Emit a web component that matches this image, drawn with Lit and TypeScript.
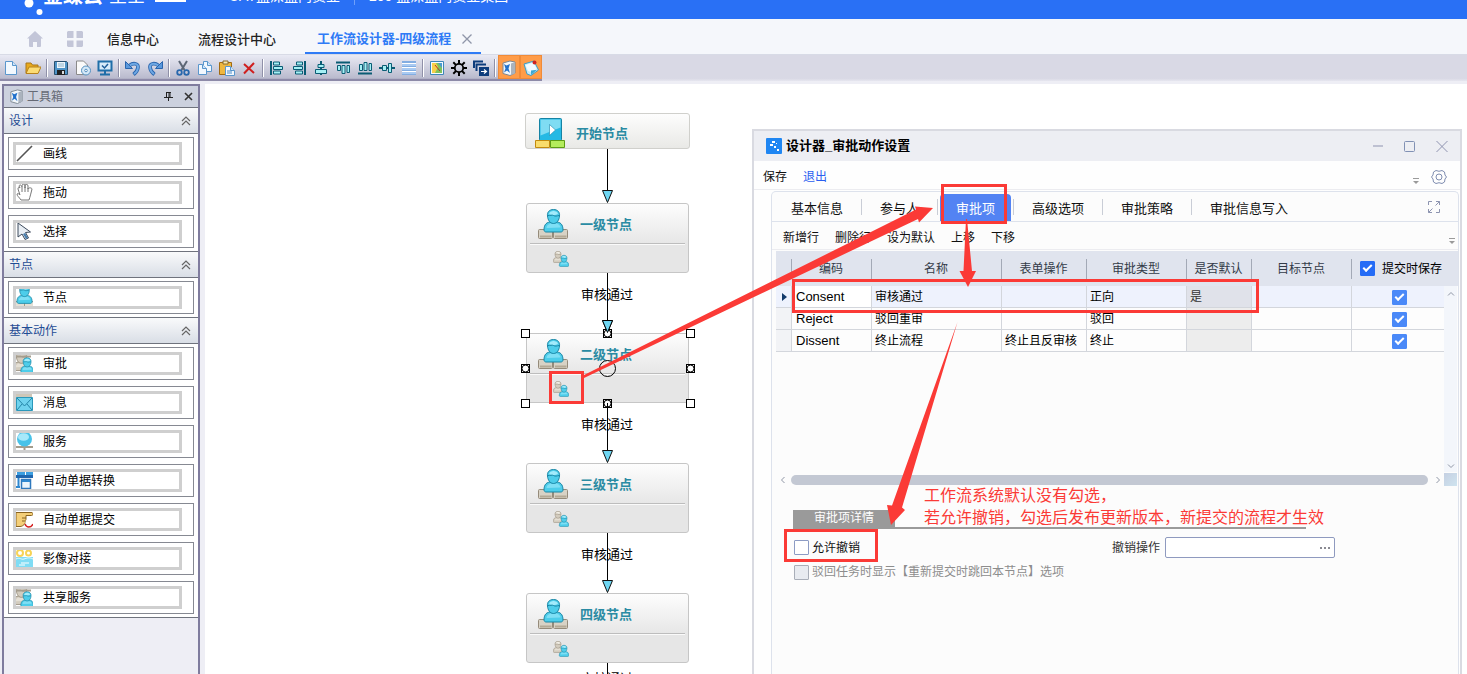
import { LitElement, html, svg, css, nothing } from "lit";
import { customElement, state } from "lit/decorators.js";
import { classMap } from "lit/directives/class-map.js";
import { styleMap } from "lit/directives/style-map.js";

const icon = (size: number, body: unknown, box = size) =>
  html`<svg class="ico" width=${size} height=${size} viewBox="0 0 ${box} ${box}" aria-hidden="true">${body}</svg>`;

/* ---------- 16px toolbar glyphs ---------- */
const page = (x = 2, y = 1, w = 12, h = 14) =>
  svg`<path d="M${x + 0.5} ${y + 0.5}h${w - 5}l4 4v${h - 5}h-${w - 1}z" fill="#f2f8fe" stroke="#5a96cc"/><path d="M${x + w - 4.5} ${y + 0.5}v4h4" fill="#cfe4f8" stroke="#5a96cc"/>`;
const bars = "#a5f0f5";
const glyphs: Record<string, unknown> = {
  new: page(),
  open: svg`<path d="M1 13V3h5l1.500 2H13v3" fill="#e8a91c" stroke="#a8761a"/><path d="M1 13.500L4 7h12l-3 6.500z" fill="#fcdc74" stroke="#b8821c"/>`,
  save: svg`<path d="M1.500 1.500h12l1 1v12h-13z" fill="#4f94c8" stroke="#29506f"/><path d="M4 2h8v6H4z" fill="#eef6fb"/><path d="M5 4h6M5 6h6" stroke="#8db4cc"/><path d="M4 10h8v5H4z" fill="#222"/><path d="M9 11h2v3H9z" fill="#ddd"/>`,
  disc: svg`<path d="M1.500 1V14.500h11V5L8.500 1z" fill="#fafafa" stroke="#8a8a8a"/><circle cx="11" cy="10.500" r="4.500" fill="#d5e9f8" stroke="#5590c0"/><circle cx="11" cy="10.500" r="1.300" fill="#fff" stroke="#5590c0"/>`,
  monitor: svg`<path d="M1.500 1.500h13v9h-13z" fill="#d7ecfa" stroke="#1f6ea8" stroke-width="2"/><path d="M5 5.500l2.500 2.500L11 4" fill="none" stroke="#1f5f9a" stroke-width="1.500"/><path d="M8 11v3M3 14.500h10" stroke="#1f6ea8" stroke-width="2"/>`,
  undo: svg`<path d="M4.500 5.500C9 2 13.500 4 13 7.500c-.300 3-2 5-4.500 7" fill="none" stroke="#2a65ad" stroke-width="3.600"/><path d="M4.500 5.500C9 2 13.500 4 13 7.500c-.300 3-2 5-4 6.500" fill="none" stroke="#6fa8e4" stroke-width="2"/><path d="M.500 1.500v7h7z" fill="#5a98dc" stroke="#2a65ad"/>`,
  redo: svg`<path d="M11.500 5.500C7 2 2.500 4 3 7.500c.300 3 2 5 4.500 7" fill="none" stroke="#2a65ad" stroke-width="3.600"/><path d="M11.500 5.500C7 2 2.500 4 3 7.500c.300 3 2 5 4 6.500" fill="none" stroke="#6fa8e4" stroke-width="2"/><path d="M15.500 1.500v7h-7z" fill="#5a98dc" stroke="#2a65ad"/>`,
  cut: svg`<path d="M4 1l5.500 9M12 1L6.500 10" stroke="#5c6675" stroke-width="2"/><circle cx="4.500" cy="12.500" r="2.300" fill="none" stroke="#2867ac" stroke-width="1.800"/><circle cx="11.500" cy="12.500" r="2.300" fill="none" stroke="#2867ac" stroke-width="1.800"/>`,
  copy: svg`${page(6, 1, 9, 11)}${page(1, 4, 9, 11)}`,
  paste: svg`<path d="M.500 2.500h12v12H.500z" fill="#efb73e" stroke="#a06a12"/><path d="M4 1h5v3H4z" fill="#f8e9b0" stroke="#8a6a2a"/>${page(6, 6, 10, 10)}<path d="M8 11h5M8 13h5" stroke="#4c8cc8"/>`,
  del: svg`<path d="M3 4l10 9M13 3L3 13.500" stroke="#cf1f1f" stroke-width="2"/>`,
  alignL: svg`<path d="M2 1v14" stroke="#0a5c74" stroke-width="2"/><path d="M4.500 2h6v3h-6zM4.500 6.500h9v3h-9zM4.500 11h7v3h-7z" fill=${bars} stroke="#0a5c74"/>`,
  alignR: svg`<path d="M14 1v14" stroke="#0a5c74" stroke-width="2"/><path d="M5.500 2h6v3h-6zM2.500 6.500h9v3h-9zM4.500 11h7v3h-7z" fill=${bars} stroke="#0a5c74"/>`,
  alignC: svg`<path d="M8 1v14" stroke="#0a5c74" stroke-width="2"/><path d="M5 4.500h6v3H5zM2.500 9.500h11v4h-11z" fill=${bars} stroke="#0a5c74"/>`,
  alignT: svg`<path d="M1 2.500h14" stroke="#0a5c74" stroke-width="2"/><path d="M2.500 5.500h3v5h-3zM7 5.500h3v8H7zM12 5.500h2.500v7H12z" fill=${bars} stroke="#0a5c74"/>`,
  alignB: svg`<path d="M1 13.500h14" stroke="#0a5c74" stroke-width="2"/><path d="M2.500 4.500h3v6h-3zM7 2.500h3v8H7zM12 3.500h2.500v7H12z" fill=${bars} stroke="#0a5c74"/>`,
  alignM: svg`<path d="M0 8h16" stroke="#0a5c74" stroke-width="2"/><path d="M3.500 5.500h4v5h-4zM9.500 3.500h3v9h-3z" fill=${bars} stroke="#0a5c74"/>`,
  rows: svg`<path d="M1 1h14v14H1z" fill="#fff"/><path d="M1 2h14M1 6h14M1 10h14M1 14h14" stroke="#5b93d8" stroke-width="1.500"/><path d="M1 4h14v2H1zM1 8h14v2H1zM1 12h14v2H1z" fill="#a9caf2"/>`,
  map: svg`<path d="M1.500 1.500h13v13h-13z" fill="#f4fbff" stroke="#3d87b8"/><path d="M3 3h10v10H3z" fill="#7fc25c"/><path d="M3 3h4l2 4-3 6H3z" fill="#f6cf4a"/><path d="M9 3h4v5z" fill="#4a9ad0"/><path d="M6 5l5 6" stroke="#b43a28"/>`,
  gear: svg`<circle cx="8" cy="8" r="4.200" fill="none" stroke="#000" stroke-width="1.800"/><path d="M8 0v4M8 12v4M0 8h4M12 8h4M2.300 2.300l2.800 2.800M10.900 10.900l2.800 2.800M2.300 13.700l2.800-2.800M10.900 5.100l2.800-2.800" stroke="#000" stroke-width="2"/>`,
  layers: svg`<path d="M1 8V1.500h9M3.500 11V4.500H13" fill="none" stroke="#0d3c7c" stroke-width="2"/><path d="M6 7h10v9H6z" fill="#0d3c7c"/><path d="M8 11.500h5M11 9.500l2.500 2-2.500 2" fill="none" stroke="#fff" stroke-width="1.200"/>`,
  cube: svg`<path d="M2 3l7-2 5 1v11l-5 2.500-7-2z" fill="#f3f7fa" stroke="#7d8792"/><path d="M10 3.500l4-1.500v11.500L10 15z" fill="#aab3be"/><path d="M3 4l2.500 1.500L9 4 7.500 8.500 9 13l-3-2.500-3 2 1.500-4z" fill="#2272cc"/>`,
  note: svg`<path d="M1 4l10-3 4.500 9L8 15.500l-4-1.500z" fill="#c4eaf8" stroke="#3e9cc4"/><path d="M2.500 5l8-2.500L14 9.500 8 12l-3-1z" fill="#f3fbff"/><path d="M8 15l0-4.500 6-.800z" fill="#3aa7d4"/><circle cx="11.500" cy="2.500" r="2" fill="#cc2222"/>`,
};
const TOOLBAR = [
  ["new:新建", "open:打开"],
  ["save:保存", "disc:另存", "monitor:检查"],
  ["undo:撤消", "redo:重做"],
  ["cut:剪切", "copy:复制", "paste:粘贴", "del:删除"],
  ["alignL:左对齐", "alignR:右对齐", "alignC:居中", "alignT:顶对齐", "alignB:底对齐", "alignM:中线", "rows:等高"],
  ["map:缩略图", "gear:设置", "layers:图层"],
  ["cube:工具箱", "note:便签"],
];

/* ---------- people and toolbox pictures ---------- */
const bust = (tone: "blue" | "grey") => {
  const [a, b, c] = tone === "blue" ? ["#a2ebfb", "#4dcdea", "#1b86a5"] : ["#f1ede4", "#d3ccbe", "#958b7a"];
  return svg`<path d="M.500 21c0-6 3-8 7-8h5c4 0 7 2 7 8 0 1-1 2-2 2h-15c-1 0-2-1-2-2z" fill=${b} stroke=${c}/>
    <path d="M3 19c0-3 3-4.500 5-4.500h4c2 0 5 1.500 5 4z" fill=${a} opacity=".6"/>
    <path d="M10 .500c4 0 6.500 2.500 6 6.500-.300 4-2.500 7.500-6 7.500S4.300 11 4 7C3.500 3 6 .500 10 .500z" fill=${b} stroke=${c}/>
    <path d="M5.500 4.500c1-3.500 8-3.500 9 0-2 2-7 2-9 0z" fill=${a}/><path d="M4.500 6.500c2 .500 4-1 5.500 0s3.500.500 5.500 0" fill="none" stroke=${c}/>`;
};
const nodePerson = html`<svg class="ico" width="30" height="30" viewBox="0 0 30 30" aria-hidden="true">
  <rect x=".500" y="20.500" width="14" height="9" rx="1" fill="#d8d2c5" stroke="#958b7a"/><rect x="15.500" y="20.500" width="14" height="9" rx="1" fill="#d8d2c5" stroke="#958b7a"/>
  <path d="M2 27.500h11.500M17 27.500h11.500" stroke="#b3a996" stroke-width="2"/>
  <g transform="translate(5.500 0)">${bust("blue")}</g></svg>`;
const startIcon = html`<svg class="ico" width="30" height="30" viewBox="0 0 30 30" aria-hidden="true">
  <rect x="4.500" y=".500" width="22" height="22" rx="1" fill="#25b9e4" stroke="#1583a4"/><path d="M5.500 1.500h20v8l-20 8z" fill="#7fdcf3"/>
  <path d="M14.500 6.500l6 5.500-6 5.500z" fill="#fff" stroke="#1787ab" stroke-width=".600"/>
  <path d="M.500 22.500h14v7h-14z" fill="#f9dc6c" stroke="#c28a0e"/><path d="M15.500 22.500h14v7h-14z" fill="#b4ec5c" stroke="#5d9c14"/></svg>`;
const pair = (size: number) => html`<svg class="ico" width=${size} height=${size} viewBox="0 0 16 16" aria-hidden="true">
  <g transform="translate(0 0) scale(.5 .5)">${bust("grey")}</g><g transform="translate(6 4) scale(.5 .5)">${bust("blue")}</g></svg>`;
const twoHeads = svg`<g transform="translate(-3 -4) scale(.85)">${bust("grey")}</g><path d="M1 1.500h14" stroke="#a59d8e" stroke-width="2"/><g transform="translate(4.500 2.500) scale(.66)">${bust("blue")}</g>`;

const toolIcons: Record<string, unknown> = {
  line: svg`<path d="M1 16L16 1" stroke="#555" stroke-width="1.600"/>`,
  hand: svg`<path d="M5 16c-2-3-4-4-4-6 1-1 2 0 3 1L2 5c0-2 1-2 2-1L3 2c1-2 2-1 3 1V1c1-1 2-1 3 0v3-3c1-1 3-1 3 1v3c1-2 4-1 4 0-1 4-2 8-3 11z" fill="#fff" stroke="#777"/><path d="M6 3v5M9 3v5M12 4v4" stroke="#777"/>`,
  pick: svg`<path d="M2 0v14l4-3 3 5.500 3.500-1.500-3-5.500 5-.500z" fill="#e8eef4" stroke="#3c4a5c"/><path d="M9 10l3 5-2 1-3-5z" fill="#4a7fae"/>`,
  node: svg`<path d="M0 12h17v5H0z" fill="#e4dfd4"/><path d="M0 12.500h17M8.500 12v5" stroke="#a49a88"/><g transform="translate(.500 -4) scale(.8)">${bust("blue")}</g>`,
  approve: twoHeads,
  mail: svg`<path d="M0 0h16v5H0z" fill="#cec7b8"/><path d="M.500 3.500h16v13H.500z" fill="#6fd3ee" stroke="#2a98bb"/><path d="M1 4l7.500 8L16 4M1 16l5-6M16 16l-5-6" fill="none" stroke="#2386a8"/>`,
  globe: svg`<path d="M0 14h17" stroke="#a49c8c" stroke-width="2"/><path d="M8.500 12v5" stroke="#a49c8c" stroke-width="2"/><circle cx="8.500" cy="6" r="7.500" fill="#48c2e8"/><ellipse cx="7.500" cy="4" rx="5.500" ry="3.800" fill="#a7e8fa"/>`,
  convert: svg`<path d="M1 0h8v3H1zM10 0h7v5h-7z" fill="#3b9ee0"/><path d="M0 3h17v3H0z" fill="#1f66ae"/><path d="M5.500 7.500h9v9h-9z" fill="#e9f4fc" stroke="#2e78bd" stroke-width="1.500"/><path d="M2.500 6v10M0 15h4M6 9h8" stroke="#2e88d0" stroke-width="2" fill="none"/>`,
  submit: svg`<path d="M0 1.500h15.500c2 0 2 3 0 3H10v4c0 4-3 7-6 7H0z" fill="#f4cf78" stroke="#8a6420"/><path d="M0 1.500h16" stroke="#8a6420"/><path d="M6 7h4M6 10h3" stroke="#8a6420"/><circle cx="13" cy="11.500" r="3.500" fill="#fff"/><path d="M9 13c1.500 4 6 4 8 0" fill="none" stroke="#d42020" stroke-width="1.500"/>`,
  image: svg`<path d="M0 7h17v10H0z" fill="#7fdcf4"/><path d="M0 9c4-2 5 1 8 0s5-2 9 0" stroke="#e6fbff" fill="none"/><circle cx="4" cy="3" r="3" fill="#fff" stroke="#f6d356" stroke-width="2"/><circle cx="12.500" cy="3" r="2.500" fill="#fff" stroke="#f6d356" stroke-width="2"/><path d="M5 13h8M3 15h6" stroke="#fff"/>`,
  share: twoHeads,
};
const TOOLBOX = [
  { title: "设计", items: [["line", "画线"], ["hand", "拖动"], ["pick", "选择"]] },
  { title: "节点", items: [["node", "节点"]] },
  {
    title: "基本动作",
    items: [["approve", "审批"], ["mail", "消息"], ["globe", "服务"], ["convert", "自动单据转换"],
      ["submit", "自动单据提交"], ["image", "影像对接"], ["share", "共享服务"]],
  },
];

const reset = css`
  *, *::before, *::after { box-sizing: border-box; }
  :host { font-family: "Liberation Sans", "Noto Sans CJK SC", sans-serif; font-size: 12px; line-height: 18px; color: #111; }
  button { font: inherit; color: inherit; background: none; border: 0; padding: 0; margin: 0; text-align: left; cursor: pointer; }
  .ico { display: block; flex: none; }
`;

@customElement("tool-box")
class ToolBox extends LitElement {
  static styles = [reset, css`
    :host { display: flex; flex-direction: column; background: #eeeef5; border: 2px solid #7f7c9e; border-bottom: 0; }
    .title { display: flex; align-items: center; height: 21px; padding: 0 5px; gap: 11px; background: #ccd1de; color: #666a75; }
    .name { flex: 1; display: flex; align-items: center; gap: 3px; }
    .head { display: flex; align-items: center; justify-content: space-between; width: 100%; height: 27px; padding: 0 7px 0 5px; border: solid #6f737d; border-width: 1px 0; color: #1f4c94; background: linear-gradient(#f9fafb, #d9dee6); }
    .items { display: flex; flex-direction: column; gap: 6px; padding: 3px 4px; background: #fff; }
    .last { border-bottom: 1px solid #6f737d; }
    .item { height: 33px; padding: 4px 11px 4px 4px; border: 1px solid #868992; }
    .inner { display: flex; align-items: center; gap: 10px; height: 23px; border: 3px solid #cfcfcf; color: #000; }
  `];
  render() {
    return html`
      <div class="title">
        <span class="name">${icon(15, glyphs.cube, 16)}工具箱</span>
        <button aria-label="固定">${icon(9, svg`<path d="M2 .500h5M2.500 0v5M6 0v5M5 0v5M0 5.500h9M4.500 5v4" stroke="#222" fill="none"/>`)}</button>
        <button aria-label="关闭">${icon(9, svg`<path d="M1 1l7 7M8 1L1 8" stroke="#333" stroke-width="1.600"/>`)}</button>
      </div>
      ${TOOLBOX.map((g, i) => html`
        <button class="head">${g.title}${icon(10, svg`<path d="M1 5l4-4 4 4M1 9l4-4 4 4" fill="none" stroke="#666" stroke-width="1.200"/>`)}</button>
        <div class=${classMap({ items: true, last: i === TOOLBOX.length - 1 })}>
          ${g.items.map(([k, label]) => html`<button class="item"><span class="inner">${icon(17, toolIcons[k])}${label}</span></button>`)}
        </div>`)}
    `;
  }
}

const NODES = ["一级节点", "二级节点", "三级节点", "四级节点"];

@customElement("flow-canvas")
class FlowCanvas extends LitElement {
  static styles = [reset, css`
    :host { display: block; position: absolute; inset: 0; overflow: hidden; }
    .edges, .grips { position: absolute; left: 0; top: 0; }
    .node { position: absolute; border: 1px solid #c6c6c6; border-radius: 3px; background: linear-gradient(#fdfdfd, #e6e6e6 60%); font-size: 13px; font-weight: 700; color: #2a8ba3; }
    .start { left: 320px; top: 29px; width: 165px; height: 36px; background: linear-gradient(#fdfdfd, #e9e9e6); border-color: #d0d0cc; }
    .start .top { height: 34px; padding: 3px 9px 0; gap: 11px; }
    .step { left: 321px; width: 163px; height: 70px; }
    .top { display: flex; align-items: center; height: 39px; padding: 0 11px; gap: 12px; }
    .top span { padding-top: 2px; }
    .sub { height: 29px; margin: 0 3px; padding: 7px 23px; border-top: 1px solid #bdbdbd; box-shadow: inset 0 1px #fafafa; }
    .label { position: absolute; left: 342px; width: 120px; text-align: center; font-size: 13px; color: #000; }
  `];
  render() {
    const ends = [119, 249, 379, 509];
    return html`
      <div class="node start"><div class="top">${startIcon}<span>开始节点</span></div></div>
      ${NODES.map((n, i) => html`<div class="node step" style=${styleMap({ top: `${119 + i * 130}px` })}>
        <div class="top">${nodePerson}<span>${n}</span></div><div class="sub">${pair(16)}</div></div>`)}
      <svg class="edges" width="500" height="700" aria-hidden="true">
        ${ends.map((y, i) => svg`<path d="M402.500 ${i ? y - 60 : 65}V${y - 13}" stroke="#000"/>
          <path d="M397.500 ${y - 12.5}h10l-5 12z" fill="#6fd6f2" stroke="#111"/>`)}
        <path d="M402.500 579v60" stroke="#000"/>
      </svg>
      ${[202, 332, 462, 586].map((y) => html`<div class="label" style=${styleMap({ top: `${y}px` })}>审核通过</div>`)}
      <svg class="grips" width="500" height="340" aria-hidden="true" fill="none" stroke="#000">
        ${[249.5, 284.5, 319.5].map((y, r) => [320.5, 402.5, 485.5].map((x, c) => r === 1 && c === 1
          ? svg`<circle cx=${x} cy=${y} r="8"/>`
          : svg`<rect x=${x - 4} y=${y - 4} width="8" height="8" fill="#fff"/>${r === 1 || c === 1 ? svg`<circle cx=${x} cy=${y} r="3.500"/>` : nothing}`))}
        <path d="M397.500 236.500h10l-5 12z" fill="#6fd6f2"/><path d="M402.500 319v6"/>
      </svg>`;
  }
}

const ROWS = [
  { code: "Consent", name: "审核通过", op: "", type: "正向", def: "是", sel: true },
  { code: "Reject", name: "驳回重审", op: "", type: "驳回", def: "", sel: false },
  { code: "Dissent", name: "终止流程", op: "终止且反审核", type: "终止", def: "", sel: false },
];

@customElement("action-dialog")
class ActionDialog extends LitElement {
  @state() tab = "审批项";
  static styles = [reset, css`
    :host { display: flex; flex-direction: column; background: #fefefe; border: 2px solid #d9dae1; border-bottom: 0; overflow: hidden; }
    .bar { display: flex; align-items: center; flex: none; height: 30px; padding: 0 12px; gap: 4px; background: #edeef3; }
    .bar h2 { flex: 1; margin: 0; font-size: 13px; font-weight: 700; color: #000; }
    .win { display: flex; gap: 20px; }
    .menu { display: flex; align-items: center; flex: none; height: 29px; padding: 3px 13px 0 9px; gap: 16px; border-bottom: 1px solid #ececf0; }
    .menu .exit { color: #2b5ff0; }
    .menu .more { align-self: flex-end; margin: 0 -4px 5px 0; }
    .fill { flex: 1; }
    .panel { flex: 1; display: flex; flex-direction: column; margin: 1px 1px 0 17px; border: 1px solid #dde2ec; border-bottom: 0; border-radius: 5px 5px 0 0; background: #fcfcfc; min-height: 0; }
    .tabs { display: flex; align-items: center; flex: none; height: 30px; padding: 0 18px 0 1px; border-bottom: 1px solid #dde2ec; font-size: 13px; }
    .tab { height: 27px; padding: 4px 18px 0; }
    .tab.on { align-self: flex-end; margin: 0 2px; padding: 3px 16px 0; background: #5383f3; color: #fff; border-radius: 4px 4px 0 0; }
    .sep { width: 1px; height: 16px; background: #c9cdd6; }
    .ops { display: flex; align-items: center; flex: none; height: 28px; padding: 4px 3px 0 11px; gap: 16px; border-bottom: 1px solid #ececf0; }
    .ops .more { align-self: flex-end; margin-bottom: 5px; }
    .grid { display: flex; flex: none; height: 221px; margin: 1px 0 0 4px; background: linear-gradient(#e0e4ee 35px, #fcfcfc 35px); }
    .data { flex: 1; min-width: 0; overflow: hidden; }
    table { border-collapse: separate; border-spacing: 0; table-layout: fixed; width: 669px; }
    col.c16 { width: 16px; } col.c80 { width: 80px; } col.c130 { width: 130px; } col.c85 { width: 85px; }
    col.c100 { width: 100px; } col.c65 { width: 65px; } col.c93 { width: 93px; }
    th { height: 35px; padding: 0 2px 0 0; font-weight: 400; color: #333b48; text-align: center; background: linear-gradient(#a3a9b6, #a3a9b6) right center / 1px 20px no-repeat; }
    th label { display: flex; align-items: center; justify-content: flex-end; gap: 7px; padding-right: 1px; color: #000; white-space: nowrap; }
    td { height: 22px; padding: 1px 4px 0 3px; border: solid #d3d6dc; border-width: 0 1px 1px 0; white-space: nowrap; line-height: 20px; color: #000; background: #fdfdfd; }
    td:first-child { background: #f2f3f6; padding: 0; }
    td.en { padding-left: 4px; font-size: 13px; }
    .sel td { background: #eef2fd; }
    .sel td.en { background: #fff; }
    td.ro { background: #ededed; color: #333; }
    .sel td.ro { background: #e0e2ea; }
    td.ck { border-right-color: transparent; padding: 0 0 0 2px; text-align: center; }
    .cursor { display: flex; padding-left: 6px; }
    input[type="checkbox"] { appearance: none; flex: none; display: inline-grid; place-content: center; width: 15px; height: 15px; margin: 0; border: 1px solid #8c9bc4; border-radius: 1px; background: #fff; vertical-align: middle; }
    input[type="checkbox"]:checked { background: #4a89f8; border-color: #4a89f8; }
    th input[type="checkbox"]:checked { background: #256cf6; border-color: #256cf6; }
    input[type="checkbox"]:checked::after { content: ""; width: 9px; height: 5px; border: solid #fff; border-width: 0 0 2px 2px; transform: rotate(-45deg) translate(1px, -1px); }
    input[type="checkbox"]:disabled { background: #e8ebf0; border-color: #a9aeb8; }
    .vs { display: flex; flex-direction: column; justify-content: space-between; align-items: center; width: 13px; padding: 4px 0 2px; margin: 35px 1px 0 0; background: #f3f6fb; }
    .hs { display: flex; align-items: center; flex: none; height: 13px; margin: 1px 1px 0 7px; gap: 4px; }
    .thumb { flex: 1; height: 10px; border-radius: 5px; background: #c3c8d3; }
    .corner { width: 13px; height: 13px; background: linear-gradient(135deg, #c5d0e2, #cfe4ef); }
    .detail { padding: 0 123px 0 21px; margin-top: 24px; }
    .cap { display: flex; width: 513px; border-bottom: 2px solid #9a9a9a; }
    .cap span { width: 102px; text-align: center; color: #fff; background: #9a9a9a; line-height: 17px; }
    .line { display: flex; align-items: center; justify-content: space-between; margin-top: 8px; }
    .line label, .line2 label { display: flex; align-items: center; gap: 3px; padding-left: 1px; }
    .line label.op { gap: 5px; color: #333; }
    .pick { display: flex; align-items: center; width: 170px; height: 21px; padding-right: 2px; border: 1px solid #8f9abf; border-radius: 2px; background: #fff; }
    .pick input { flex: 1; min-width: 0; height: 17px; border: 0; outline: 0; background: none; }
    .line2 { margin-top: 5px; color: #8d8d8d; }
  `];
  render() {
    const drop = html`<span class="more">${icon(6, svg`<path d="M0 .500h6" stroke="#9a9a9a"/><path d="M0 3h6L3 6z" fill="#9a9a9a"/>`)}</span>`;
    const tabs = ["基本信息", "参与人", "审批项", "高级选项", "审批策略", "审批信息写入"];
    const arrow = (d: string) => icon(8, svg`<path d=${d} fill="none" stroke="#9097a6"/>`);
    return html`
      <header class="bar">
        ${icon(16, svg`<rect width="16" height="16" rx="1" fill="#1f86f2"/><path d="M6 3h3v2H6zM4 6h3v2H4zM8 8h2v2H8zM11 11h2v2h-2zM10 5h1v1h-1z" fill="#fff"/>`)}
        <h2>设计器_审批动作设置</h2>
        <span class="win">
          <button aria-label="最小化">${icon(12, svg`<path d="M1 6h10" stroke="#8f93b0"/>`)}</button>
          <button aria-label="最大化">${icon(12, svg`<rect x=".500" y="1.500" width="10" height="10" rx="1" fill="none" stroke="#8191b4"/>`)}</button>
          <button aria-label="关闭">${icon(12, svg`<path d="M.500 1l11 11M11.500 1l-11 11" stroke="#8f93b0"/>`)}</button>
        </span>
      </header>
      <nav class="menu"><button>保存</button><button class="exit">退出</button><span class="fill"></span>
        ${drop}<button aria-label="设置">${icon(16, svg`<path d="M5 1.500l3 .800 3-.800 2.500 1.500.500 3 1.500 2-1.500 2-.500 3-2.500 1.500-3-.800-3 .800L2.500 13 2 10 .500 8 2 6l.500-3z" fill="none" stroke="#7f8db0"/><circle cx="8" cy="8" r="3" fill="none" stroke="#7f8db0"/>`)}</button></nav>
      <section class="panel">
        <div class="tabs" role="tablist">
          ${tabs.map((t, i) => html`<button role="tab" aria-selected=${t === this.tab} class=${classMap({ tab: true, on: t === this.tab })} @click=${() => (this.tab = t)}>${t}</button>${i < tabs.length - 1 ? html`<span class="sep"></span>` : nothing}`)}
          <span class="fill"></span>
          <button aria-label="全屏">${icon(12, svg`<path d="M.500 4V.500H4M11.500 8v3.500H8M8 .500h3.500V4M11.500.500L7.500 4.500M.500 8v3.500H4M.500 11.500l4-4" fill="none" stroke="#8d94b0"/>`)}</button>
        </div>
        <div class="ops">${["新增行", "删除行", "设为默认", "上移", "下移"].map((t) => html`<button>${t}</button>`)}<span class="fill"></span>${drop}</div>
        <div class="grid">
          <div class="data"><table>
            <colgroup><col class="c16"><col class="c80"><col class="c130"><col class="c85"><col class="c100"><col class="c65"><col class="c100"><col class="c93"></colgroup>
            <thead><tr><th></th>${["编码", "名称", "表单操作", "审批类型", "是否默认", "目标节点"].map((h) => html`<th>${h}</th>`)}
              <th><label><input type="checkbox" checked>提交时保存</label></th></tr></thead>
            <tbody>${ROWS.map((r) => html`<tr class=${classMap({ sel: r.sel })}>
              <td>${r.sel ? html`<span class="cursor">${icon(8, svg`<path d="M0 0v8l5-4z" fill="#123a6b"/>`)}</span>` : nothing}</td>
              <td class="en">${r.code}</td><td>${r.name}</td><td>${r.op}</td><td>${r.type}</td><td class="ro">${r.def}</td><td></td>
              <td class="ck"><input type="checkbox" checked aria-label="提交时保存"></td></tr>`)}</tbody>
          </table></div>
          <div class="vs">${arrow("M1 5.500l3-3 3 3")}${arrow("M1 2.500l3 3 3-3")}</div>
        </div>
        <div class="hs">${arrow("M5.500 1l-3 3 3 3")}<span class="thumb"></span>${arrow("M4.500 1l3 3-3 3")}<span class="corner"></span></div>
        <div class="detail">
          <div class="cap"><span>审批项详情</span></div>
          <div class="line"><label><input type="checkbox">允许撤销</label>
            <label class="op">撤销操作<span class="pick"><input type="text">${icon(12, svg`<path d="M0 5h2v2H0zM4 5h2v2H4zM8 5h2v2H8z" fill="#8a8a92"/>`)}</span></label></div>
          <div class="line2"><label><input type="checkbox" disabled>驳回任务时显示【重新提交时跳回本节点】选项</label></div>
        </div>
      </section>`;
  }
}

@customElement("app-root")
class AppRoot extends LitElement {
  static styles = [reset, css`
    :host { display: flex; flex-direction: column; position: relative; height: 100vh; overflow: hidden; background: #eeeef5; }
    .brand { display: flex; align-items: flex-end; flex: none; height: 19px; padding: 0 24px 14px; background: #2970f5; color: #fff; overflow: hidden; font-size: 14px; }
    .brand .logo { margin-bottom: -11px; }
    .brand b { font-size: 20px; }
    .brand .star { padding-left: 6px; font-size: 18px; }
    .brand .badge { width: 31px; height: 20px; margin: 0 43px 3px 10px; background: #fff; }
    .brand .rule { width: 1px; height: 20px; margin: 0 14px; background: #6fa0fa; }
    .nav { display: flex; align-items: stretch; flex: none; height: 36px; padding-left: 15px; background: #f5f7fb; border-bottom: 1px solid #d8dbe6; font-size: 13px; font-weight: 500; color: #222; }
    .nav button { padding: 6px 20px 0 19px; }
    .nav .sq { display: flex; align-items: center; padding: 4px 12px 0; }
    .nav .sq + button { margin-left: -7px; }
    .nav .sq + .sq { margin-left: 0; }
    .nav .on { display: flex; align-items: center; gap: 11px; padding: 6px 9px 0 12px; margin-left: 9px; color: #2f7bf6; font-weight: 700; border-bottom: 2px solid #2f7bf6; }
    .strip { display: flex; flex: none; height: 29px; background: #eeeef5; }
    .tools { display: flex; height: 26px; background: linear-gradient(#e9eaf4, #b9bacd 90%, #8d8aa8 92%); }
    .rest { flex: 1; height: 26px; background: linear-gradient(#d9d9e5 90%, #e6e6ef); }
    .tools button { display: grid; place-content: center; width: 22px; height: 24px; padding-top: 2px; }
    .tools .hot { background: #ff9c48; box-shadow: inset 0 0 0 1px #f08b38; }
    .div { width: 1px; height: 18px; margin: 4px 3px 0 2px; background: #8f90a8; box-shadow: 1px 0 #fff; }
    .work { display: flex; flex: 1; min-height: 0; padding-left: 2px; gap: 5px; }
    tool-box { flex: none; width: 198px; }
    .stage { position: relative; flex: 1; background: #fff; }
    action-dialog { position: absolute; left: 547px; right: 5px; top: 45px; bottom: 0; }
    .marks { position: absolute; left: 0; top: 0; pointer-events: none; }
    .remark { position: absolute; left: 924px; top: 485px; margin: 0; font-size: 16px; line-height: 22px; color: #fb3a36; white-space: nowrap; pointer-events: none; }
  `];
  render() {
    return html`
      <header class="brand">
        <svg class="ico logo" width="19" height="19" aria-hidden="true"><circle cx="5" cy="6" r="4.500" fill="#fff"/><circle cx="15.500" cy="15" r="3" fill="#fff"/></svg>
        <b>金蝶云</b><span class="star">星空</span><span class="badge"></span>
        <span>UAT蓝深蓝内贸业</span><span class="rule"></span><span>200 蓝深蓝内贸业集团</span>
      </header>
      <nav class="nav">
        <button class="sq" aria-label="首页">${icon(16, svg`<path d="M8 0l8 7.500h-2V15a1 1 0 0 1-1 1h-3v-5H6v5H3a1 1 0 0 1-1-1V7.500H0z" fill="#c3c6d8"/>`)}</button>
        <button class="sq" aria-label="应用">${icon(16, svg`<path d="M1 0h5.500v7H0V1zM9.500 0H15l1 1v6H9.500zM0 9.500h6.500V16H1l-1-1zM9.500 9.500H16V15l-1 1H9.500z" fill="#c3c6d8"/>`)}</button>
        <button>信息中心</button><button>流程设计中心</button>
        <button class="on">工作流设计器-四级流程${icon(10, svg`<path d="M.500.500l9 9M9.500.500l-9 9" stroke="#8f96a8" stroke-width="1.300"/>`)}</button>
      </nav>
      <div class="strip">
        <div class="tools" role="toolbar">
          ${TOOLBAR.map((g, i) => html`${i ? html`<span class="div"></span>` : nothing}${g.map((t) => {
            const [k, label] = t.split(":");
            return html`<button aria-label=${label} class=${classMap({ hot: i === 6 })}>${icon(16, glyphs[k])}</button>`;
          })}`)}
        </div><div class="rest"></div>
      </div>
      <main class="work">
        <tool-box></tool-box>
        <div class="stage"><flow-canvas></flow-canvas><action-dialog></action-dialog></div>
      </main>
      <svg class="marks" width="1300" height="600" aria-hidden="true">
        <g fill="none" stroke="#fb3a36" stroke-width="3">
          <rect x="550.500" y="372.500" width="32" height="30"/><rect x="942.500" y="185.500" width="63" height="37"/>
          <rect x="793.500" y="280.500" width="464" height="31"/><rect x="785.500" y="530.500" width="91" height="30"/>
        </g>
        <g fill="#fb3a36">
          <path d="M583 375.500L916 209.500l-1-3 18 1.500-14 14.500-1-3.500L584 378z"/>
          <path d="M966 219h1l5 52h4L968 287l-8.500-16h4z"/>
          <path d="M957.500 322L902 507.500l3 2.500-14 15-4-20 5 .500z"/>
        </g>
      </svg>
      <p class="remark">工作流系统默认没有勾选，<br>若允许撤销，勾选后发布更新版本，新提交的流程才生效</p>
    `;
  }
}
